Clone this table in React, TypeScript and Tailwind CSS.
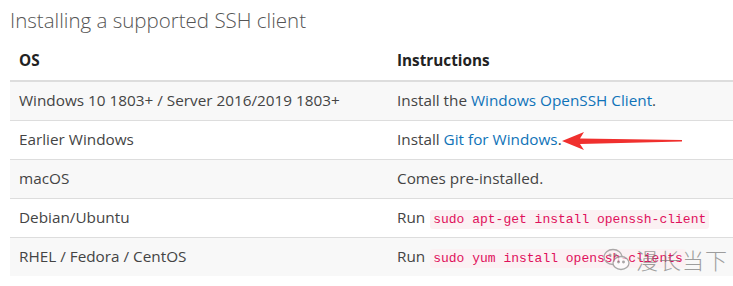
import { ReactNode } from "react"

const rows: { os: string; ins: ReactNode }[] = [
  {
    os: "Windows 10 1803+ / Server 2016/2019 1803+",
    ins: (
      <>
        Install the <a className="text-[#0f73b8]">Windows OpenSSH Client</a>.
      </>
    ),
  },
  {
    os: "Earlier Windows",
    ins: (
      <>
        Install <a className="text-[#0f73b8]">Git for Windows</a>.
      </>
    ),
  },
  { os: "macOS", ins: "Comes pre-installed." },
  {
    os: "Debian/Ubuntu",
    ins: (
      <>
        Run <Code>sudo apt-get install openssh-client</Code>
      </>
    ),
  },
  {
    os: "RHEL / Fedora / CentOS",
    ins: (
      <>
        Run <Code>sudo yum install openssh-clients</Code>
      </>
    ),
  },
]

function Code({ children }: { children: ReactNode }) {
  return (
    <code className="ml-[1px] rounded-[3px] bg-[#fbf1f3] px-[3px] py-[2px] font-['Liberation_Mono',monospace] text-[13px] text-[#e0105c]">
      {children}
    </code>
  )
}

export default function App() {
  return (
    <div className="relative h-[286px] w-[733px] overflow-hidden bg-white font-['Open_Sans',sans-serif] text-[#333]">
      <h2 className="pl-[10px] pt-[5px] text-[20.5px] leading-[30px] font-light text-[#555]">
        Installing a supported SSH client
      </h2>

      <table className="ml-[10px] mt-[6px] w-[723px] border-collapse text-[15.3px]">
        <thead>
          <tr className="h-[40px] border-b-2 border-[#ddd]">
            <th className="w-[378px] pl-[9px] text-left font-bold text-[#222]">OS</th>
            <th className="pl-[9px] text-left font-bold text-[#222]">Instructions</th>
          </tr>
        </thead>
        <tbody>
          {rows.map((r, i) => (
            <tr
              key={r.os}
              className={
                i % 2 === 0
                  ? "h-[39px] border-b border-[#ddd] bg-[#f8f8f8] last:border-b-0"
                  : "h-[39px] border-b border-[#ddd] bg-white"
              }
            >
              <td className="pl-[9px] text-[#444]">{r.os}</td>
              <td className="pl-[9px] text-[#444]">{r.ins}</td>
            </tr>
          ))}
        </tbody>
      </table>

      {/* red arrow pointing at the link */}
      <svg className="absolute left-[560px] top-[130px]" width="125" height="22" viewBox="0 0 125 22">
        <path d="M2 11 L24 2 L20 8.5 L122 10 L122 11.5 L20 14 L24 20 Z" fill="#f0302e" />
      </svg>

      {/* watermark */}
      <div className="absolute left-[603px] top-[243px] flex items-center gap-[5px] opacity-70">
        <svg width="28" height="26" viewBox="0 0 28 26" fill="none" stroke="#888" strokeWidth="1.3">
          <ellipse cx="10" cy="10" rx="9" ry="7.5" />
          <ellipse cx="18" cy="16" rx="8" ry="6.5" fill="white" />
          <circle cx="7" cy="8" r="0.9" fill="#888" />
          <circle cx="12.5" cy="8" r="0.9" fill="#888" />
          <circle cx="15.5" cy="15" r="0.8" fill="#888" />
          <circle cx="20.5" cy="15" r="0.8" fill="#888" />
        </svg>
        <span className="font-['Noto_Sans_CJK_SC',sans-serif] text-[22px] font-light tracking-[1px] text-[#777]">
          漫长当下
        </span>
      </div>
    </div>
  )
}
